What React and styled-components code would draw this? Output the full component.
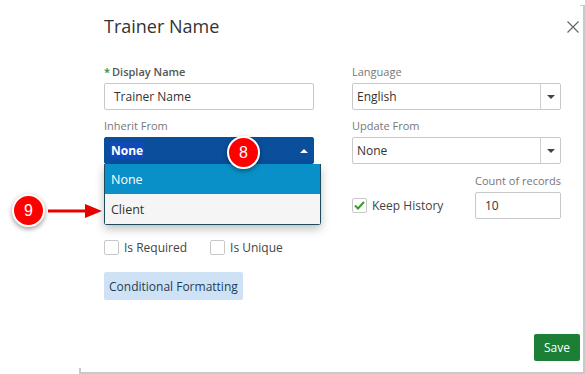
import React from "react";
import styled, { createGlobalStyle } from "styled-components";

const GlobalStyle = createGlobalStyle`
  html, body {
    margin: 0;
    padding: 0;
    background: #fff;
    font-family: "Open Sans", "Liberation Sans", sans-serif;
  }
`;

const Page = styled.div`
  position: relative;
  width: 585px;
  height: 374px;
  overflow: hidden;
`;

const Modal = styled.div`
  position: relative;
  box-sizing: border-box;
  margin: 5px 0 0 79px;
  width: 506px;
  height: 369px;
  padding: 8px 3px 0 25px;
  background: #fff;
  border-right: 2px solid #c9c9c9;
  border-bottom: 2px solid #c9c9c9;
  display: flex;
  flex-direction: column;
  &::before {
    content: "";
    position: absolute;
    top: 0;
    right: -2px;
    width: 5px;
    height: 1px;
    background: #c9c9c9;
  }
  &::after {
    content: "";
    position: absolute;
    left: 0;
    bottom: -2px;
    width: 2px;
    height: 6px;
    background: #c9c9c9;
  }
`;

const Header = styled.div`
  display: flex;
  align-items: center;
  justify-content: space-between;
  padding-right: 1px;
`;

const Title = styled.h1`
  margin: 0;
  font-size: 18px;
  line-height: 26px;
  font-weight: 400;
  color: #333;
`;

const Close = styled.svg`
  width: 12px;
  height: 12px;
  margin-top: 2px;
`;

const Body = styled.div`
  margin-top: 25px;
  display: flex;
  flex-direction: column;
`;

const Row = styled.div`
  display: grid;
  grid-template-columns: 210px 209px;
  column-gap: 38px;
  margin-top: ${p => p.$gap || 0}px;
`;

const Field = styled.div`
  position: relative;
  display: flex;
  flex-direction: column;
  align-items: ${p => (p.$end ? "flex-end" : "stretch")};
`;

const Label = styled.label`
  font-size: 11px;
  line-height: 16px;
  height: 16px;
  margin-bottom: 3px;
  color: ${p => (p.$strong ? "#555" : "#777")};
  font-weight: ${p => (p.$strong ? 600 : 400)};
  white-space: nowrap;
`;

const Star = styled.span`
  color: #2e8b3a;
  margin-right: 2px;
`;

const Input = styled.div`
  box-sizing: border-box;
  height: 27px;
  width: ${p => p.$width || "100%"};
  border: 1px solid #c8c8c8;
  border-radius: 2px;
  padding: 0 9px;
  display: flex;
  align-items: center;
  font-size: 12px;
  color: #333;
`;

const Select = styled.div`
  box-sizing: border-box;
  height: 27px;
  display: flex;
  align-items: stretch;
  border: 1px solid ${p => (p.$open ? "#0a4f9c" : "#c8c8c8")};
  border-radius: 2px;
  background: ${p => (p.$open ? "#0a4f9c" : "#fff")};
  font-size: 12px;
  color: ${p => (p.$open ? "#fff" : "#333")};
  font-weight: ${p => (p.$open ? 700 : 400)};
`;

const SelectValue = styled.div`
  flex: 1;
  display: flex;
  align-items: center;
  padding-left: ${p => (p.$open ? 5 : 4)}px;
`;

const Highlight = styled.span`
  background: #1049b8;
  padding: 0 1px;
  line-height: 17px;
`;

const Caret = styled.div`
  width: 19px;
  display: flex;
  align-items: center;
  justify-content: center;
  border-left: 1px solid ${p => (p.$open ? "transparent" : "#d0d0d0")};
  &::after {
    content: "";
    border-left: 4px solid transparent;
    border-right: 4px solid transparent;
    ${p =>
      p.$open
        ? "border-bottom: 4px solid #fff;"
        : "border-top: 4px solid #444;"}
  }
`;

const Menu = styled.ul`
  position: absolute;
  top: 100%;
  left: 0;
  width: 217px;
  margin: 0;
  padding: 0;
  list-style: none;
  box-sizing: border-box;
  border: 1px solid #1e4a5c;
  border-top: none;
  border-radius: 0 0 3px 3px;
  background: #f5f5f5;
  box-shadow: 0 4px 10px rgba(0, 0, 0, 0.25);
  z-index: 5;
`;

const MenuItem = styled.li`
  height: 30px;
  padding-left: 6px;
  display: flex;
  align-items: center;
  font-size: 12.5px;
  color: ${p => (p.$active ? "#fff" : "#333")};
  background: ${p => (p.$active ? "#0a90c8" : "#f5f5f5")};
`;

const HistoryCell = styled.div`
  display: flex;
  align-items: flex-end;
  justify-content: space-between;
`;

const CheckRow = styled.div`
  height: 27px;
  display: flex;
  align-items: center;
`;

const Check = styled.label`
  display: flex;
  align-items: center;
  gap: 5px;
  font-size: 12px;
  color: #444;
  margin-right: ${p => p.$mr || 0}px;
`;

const Box = styled.span`
  box-sizing: border-box;
  width: 15px;
  height: 15px;
  border: 1px solid #c8c8c8;
  border-radius: 2px;
  background: #fff;
  display: flex;
  align-items: center;
  justify-content: center;
`;

const Checks = styled.div`
  display: flex;
  margin-top: 20px;
  height: 16px;
  align-items: center;
`;

const SoftButton = styled.button`
  align-self: flex-start;
  margin-top: 17px;
  height: 28px;
  padding: 0 5px;
  border: none;
  border-radius: 2px;
  background: #cfe2f5;
  color: #1e3c58;
  font-family: inherit;
  font-size: 12px;
`;

const Footer = styled.div`
  margin-top: auto;
  margin-bottom: 11px;
  display: flex;
  justify-content: flex-end;
`;

const SaveButton = styled.button`
  height: 27px;
  width: 46px;
  border: none;
  border-radius: 2px;
  background: #1b7f35;
  color: #fff;
  font-family: inherit;
  font-size: 12px;
`;

const Badge = styled.div`
  position: absolute;
  left: ${p => p.$x}px;
  top: ${p => p.$y}px;
  box-sizing: border-box;
  width: 33px;
  height: 33px;
  border-radius: 50%;
  border: 2px solid #fff;
  background: #f00;
  color: #fff;
  font-family: "Liberation Sans", Arial, sans-serif;
  font-size: 16px;
  display: flex;
  align-items: center;
  justify-content: center;
  box-shadow: 0 2px 5px rgba(0, 0, 0, 0.4);
  z-index: 10;
`;

const Arrow = styled.svg`
  position: absolute;
  left: 47px;
  top: 203px;
  z-index: 10;
`;

const CheckMark = () => (
  <svg width="11" height="9" viewBox="0 0 11 9">
    <path d="M1 4.5 L4 7.5 L10 1" fill="none" stroke="#3a9a2a" strokeWidth="2" />
  </svg>
);

export default function App() {
  return (
    <Page>
      <GlobalStyle />
      <Modal>
        <Header>
          <Title>Trainer Name</Title>
          <Close viewBox="0 0 12 12">
            <path d="M0.5 0.5 L11.5 11.5 M11.5 0.5 L0.5 11.5" stroke="#666" strokeWidth="1.2" />
          </Close>
        </Header>
        <Body>
          <Row>
            <Field>
              <Label $strong>
                <Star>*</Star>Display Name
              </Label>
              <Input>Trainer Name</Input>
            </Field>
            <Field>
              <Label>Language</Label>
              <Select>
                <SelectValue>English</SelectValue>
                <Caret />
              </Select>
            </Field>
          </Row>
          <Row $gap={8}>
            <Field>
              <Label>Inherit From</Label>
              <Select $open>
                <SelectValue $open>
                  <Highlight>None</Highlight>
                </SelectValue>
                <Caret $open />
              </Select>
              <Menu>
                <MenuItem $active>None</MenuItem>
                <MenuItem>Client</MenuItem>
              </Menu>
            </Field>
            <Field>
              <Label>Update From</Label>
              <Select>
                <SelectValue>None</SelectValue>
                <Caret />
              </Select>
            </Field>
          </Row>
          <Row $gap={9}>
            <div />
            <HistoryCell>
              <CheckRow>
                <Check>
                  <Box>
                    <CheckMark />
                  </Box>
                  Keep History
                </Check>
              </CheckRow>
              <Field $end>
                <Label>Count of records</Label>
                <Input $width="86px">10</Input>
              </Field>
            </HistoryCell>
          </Row>
          <Checks>
            <Check $mr={23}>
              <Box />
              Is Required
            </Check>
            <Check>
              <Box />
              Is Unique
            </Check>
          </Checks>
          <SoftButton>Conditional Formatting</SoftButton>
        </Body>
        <Footer>
          <SaveButton>Save</SaveButton>
        </Footer>
      </Modal>
      <Badge $x={227} $y={136}>8</Badge>
      <Badge $x={12} $y={194}>9</Badge>
      <Arrow width="56" height="16" viewBox="0 0 56 16">
        <path d="M1 8 H40" stroke="#e60000" strokeWidth="3" />
        <path d="M38 1 L55 8 L38 15 Z" fill="#e60000" />
      </Arrow>
    </Page>
  );
}
